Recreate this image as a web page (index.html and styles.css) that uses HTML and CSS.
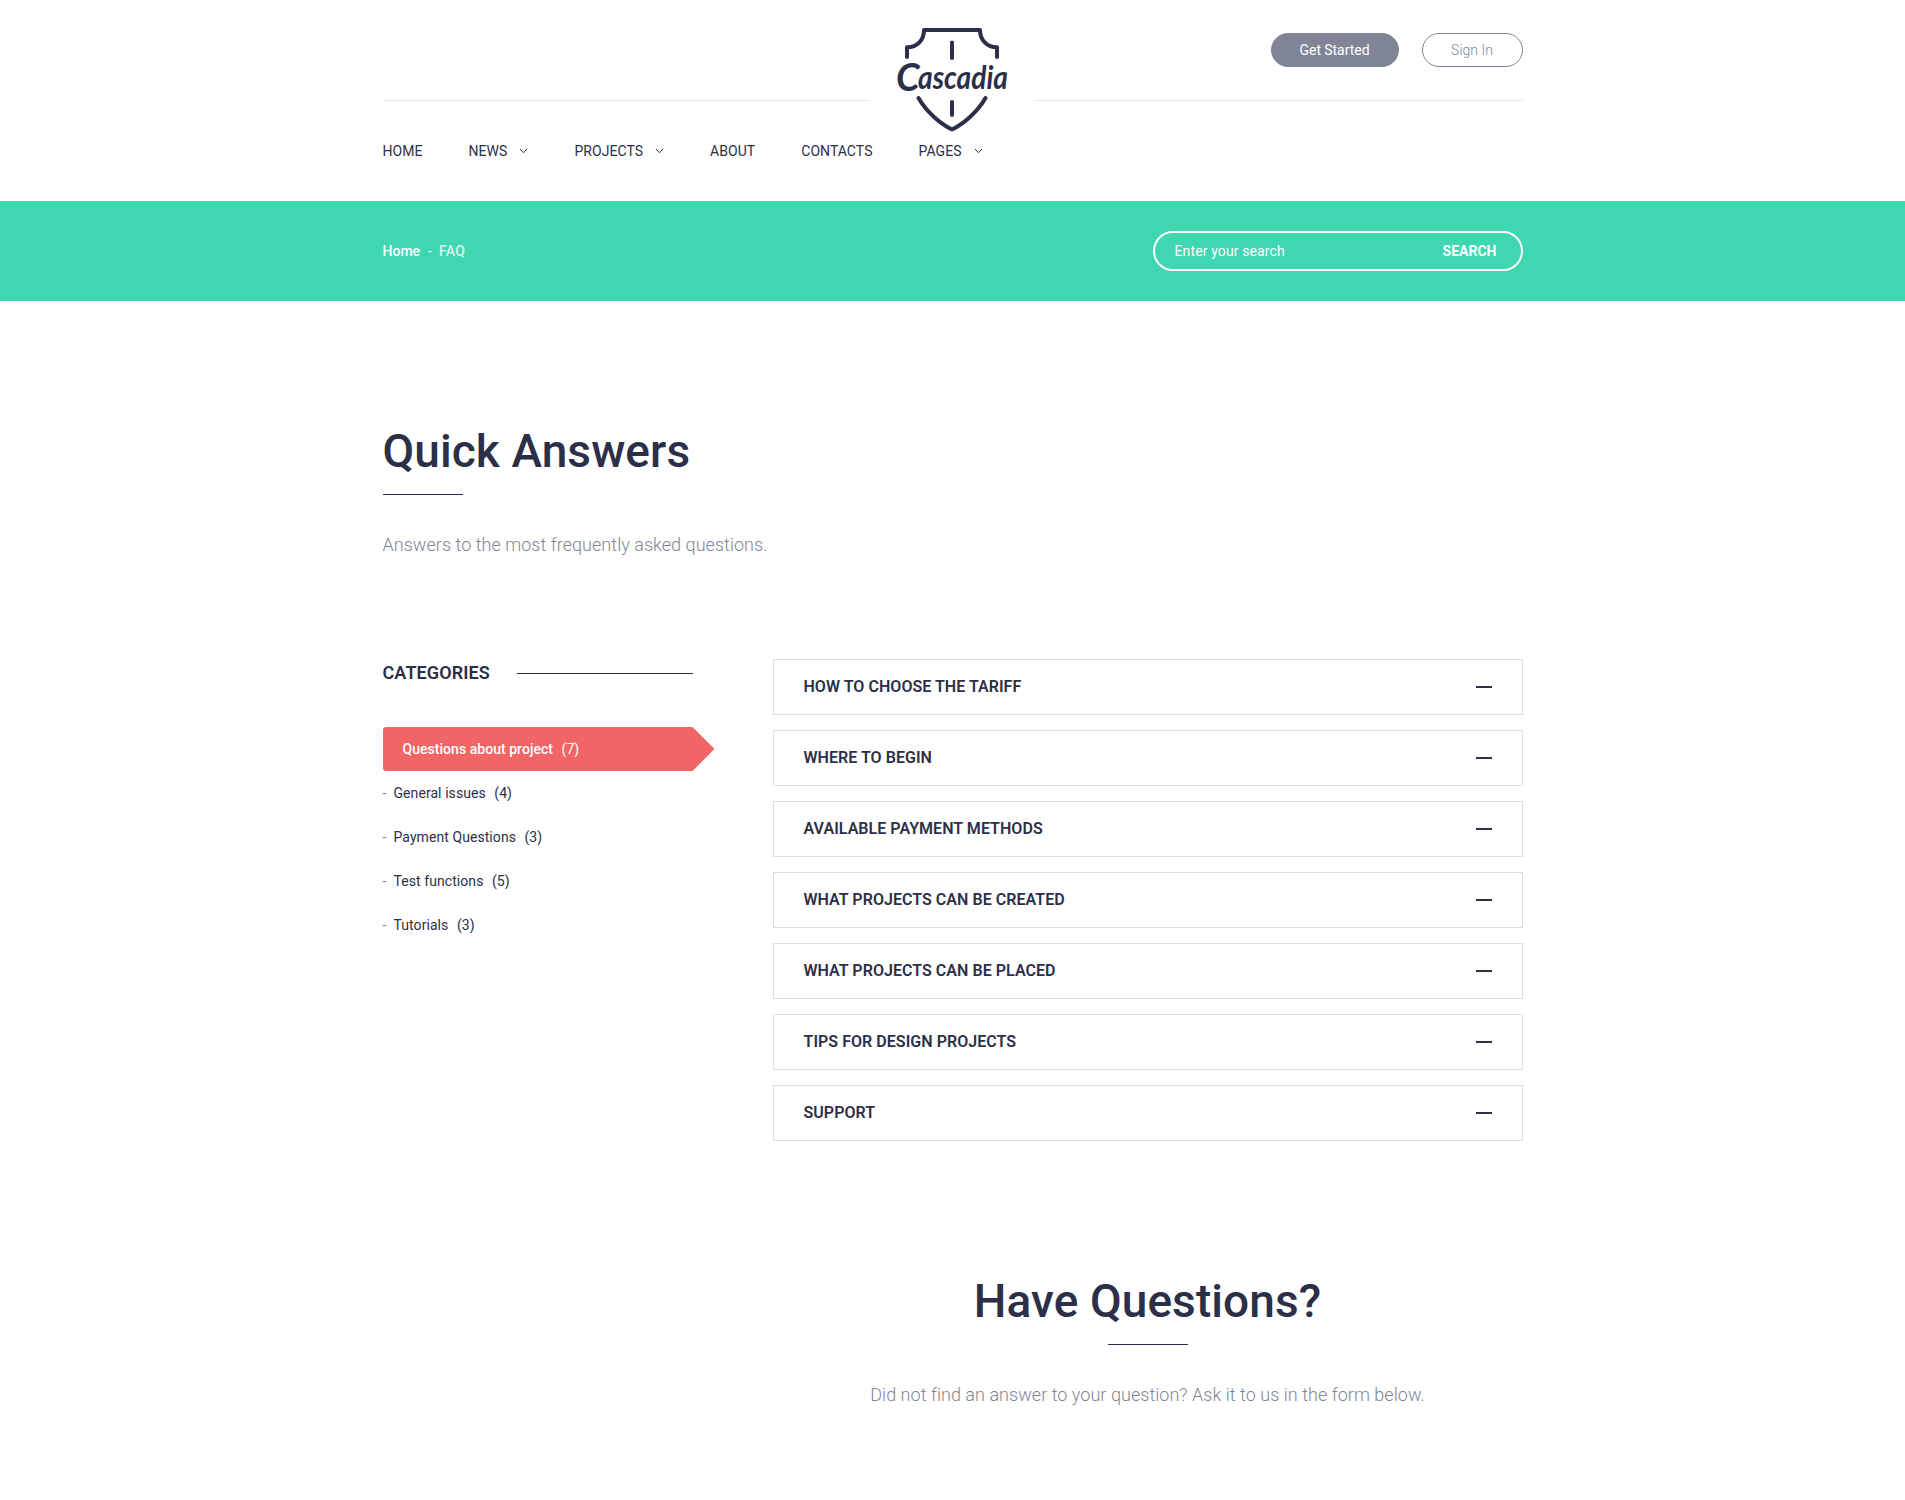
FILE: index.html
```
<!DOCTYPE html>
<html lang="en">
<head>
<meta charset="utf-8">
<title>FAQ - Cascadia</title>
<link rel="stylesheet" href="styles.css">
</head>
<body>
<header class="header container">
  <div class="header-top">
    <span class="rule"></span>
    <a class="logo" href="#" aria-label="Cascadia">
      <svg width="165" height="120" viewBox="870 20 165 120">
        <g fill="none" stroke="#2b2f48" stroke-width="4" stroke-linecap="round" stroke-linejoin="round">
          <path d="M907 57V47.300C917.500 47.300 924 40 924 30H980C980 40 987 47.300 997 47.300V57"/>
          <path d="M952 42.500V58M952 102V115"/>
          <path d="M918.500 98C926 111 939 123 952 129.500C965 123 978 111 985.500 98"/>
        </g>
        <text class="wordmark" y="89"><tspan class="initial" x="896" y="90.500">C</tspan><tspan x="918" y="88.500" textLength="90" lengthAdjust="spacingAndGlyphs">ascadia</tspan></text>
      </svg>
    </a>
    <div class="rule">
      <div class="actions"><a class="btn btn-fill" href="#">Get Started</a><a class="btn btn-line" href="#">Sign In</a></div>
    </div>
  </div>
  <nav class="nav">
    <a href="#">HOME</a>
    <a href="#">NEWS<svg class="chev" width="9" height="6" viewBox="0 0 9 6"><path d="M1 1l3.500 3.700L8 1"/></svg></a>
    <a href="#">PROJECTS<svg class="chev" width="9" height="6" viewBox="0 0 9 6"><path d="M1 1l3.500 3.700L8 1"/></svg></a>
    <a href="#">ABOUT</a>
    <a href="#">CONTACTS</a>
    <a href="#">PAGES<svg class="chev" width="9" height="6" viewBox="0 0 9 6"><path d="M1 1l3.500 3.700L8 1"/></svg></a>
  </nav>
</header>
<section class="band">
  <div class="container band-inner">
    <div class="crumbs"><a href="#">Home</a><span class="sep">-</span><span class="here">FAQ</span></div>
    <div class="search"><span>Enter your search</span><b>SEARCH</b></div>
  </div>
</section>
<main class="container">
  <div class="intro">
    <h1>Quick Answers</h1>
    <p>Answers to the most frequently asked questions.</p>
  </div>
  <div class="columns">
    <aside class="side">
      <h2>CATEGORIES</h2>
      <ul class="cats">
        <li class="active"><span>Questions about project</span><span class="n">(7)</span></li>
        <li><i>-</i><span>General issues</span><span class="n">(4)</span></li>
        <li><i>-</i><span>Payment Questions</span><span class="n">(3)</span></li>
        <li><i>-</i><span>Test functions</span><span class="n">(5)</span></li>
        <li><i>-</i><span>Tutorials</span><span class="n">(3)</span></li>
      </ul>
    </aside>
    <div class="content">
      <div class="faq">
        <div class="q">HOW TO CHOOSE THE TARIFF</div>
        <div class="q">WHERE TO BEGIN</div>
        <div class="q">AVAILABLE PAYMENT METHODS</div>
        <div class="q">WHAT PROJECTS CAN BE CREATED</div>
        <div class="q">WHAT PROJECTS CAN BE PLACED</div>
        <div class="q">TIPS FOR DESIGN PROJECTS</div>
        <div class="q">SUPPORT</div>
      </div>
      <div class="ask">
        <h1>Have Questions?</h1>
        <p>Did not find an answer to your question? Ask it to us in the form below.</p>
      </div>
    </div>
  </div>
</main>
</body>
</html>
```
FILE: styles.css
```
* { box-sizing: border-box; }
body {
  margin: 0;
  font-family: Roboto, "Liberation Sans", sans-serif;
  font-size: 14px;
  line-height: 24px;
  color: #2b2f48;
  background: #fff;
}
a { color: inherit; text-decoration: none; }
h1, h2, p, ul { margin: 0; padding: 0; }
.container { width: 1140px; margin: 0 auto; }

.header { height: 201px; }
.header-top { display: flex; justify-content: space-between; height: 101px; }
.rule { width: 488px; border-bottom: 1px solid #dfe8ee; }
.logo { height: 120px; margin: 20px 0 -39px; }
.logo svg { display: block; }
.wordmark {
  font: italic 700 32px Lato, "Liberation Sans", sans-serif;
  fill: #2b2f48;
}
.initial { font-size: 38px; }
.actions { display: flex; justify-content: flex-end; gap: 23px; padding-top: 33px; }
.btn {
  width: 101px;
  height: 34px;
  border: 1px solid #7f8597;
  border-radius: 17px;
  line-height: 32px;
  text-align: center;
  font-weight: 300;
  color: #7f8597;
}
.btn-fill { width: 128px; background: #7f8597; color: #fff; font-weight: 400; letter-spacing: -.05px; }
.nav { display: flex; gap: 46px; padding-top: 38px; letter-spacing: .05px; }
.nav a { display: flex; align-items: center; gap: 12px; }
.chev path { fill: none; stroke: #2b2f48; stroke-width: 1; }

.band { height: 100px; background: #3fd7b2; color: #fff; }
.band-inner { display: flex; align-items: center; justify-content: space-between; height: 100%; }
.crumbs { display: flex; font-weight: 500; }
.sep { margin: 0 7px 0 8px; font-weight: 400; opacity: .8; }
.here { opacity: .8; letter-spacing: .3px; }
.search {
  display: flex;
  align-items: center;
  justify-content: space-between;
  width: 370px;
  height: 40px;
  padding: 0 24px 0 20px;
  border: 2px solid #fff;
  border-radius: 20px;
}
.search span { letter-spacing: .12px; }
.search b { font-weight: 700; }

h1 { font-size: 46px; line-height: 60px; font-weight: 500; letter-spacing: .09px; }
h1::after { content: ""; display: block; width: 80px; height: 1px; margin-top: 13px; background: #2b2f48; }
.intro { padding-top: 120px; }
.intro p, .ask p { margin-top: 34px; font-size: 18px; line-height: 32px; font-weight: 300; color: #7f8597; letter-spacing: .035px; }
.columns { display: flex; justify-content: space-between; margin-top: 98px; }
.side { width: 310px; }
h2 { display: flex; align-items: center; gap: 27px; font-size: 18px; line-height: 28px; font-weight: 600; letter-spacing: .1px; }
h2::after { content: ""; flex: 1; height: 1px; background: #2b2f48; }
.cats { margin-top: 40px; list-style: none; letter-spacing: .07px; }
.cats li { display: flex; align-items: center; height: 44px; }
.cats i { width: 11px; font-style: normal; color: #7f8597; }
.n { margin-left: 8.5px; }
.cats .active {
  width: 332px;
  padding-left: 20px;
  border-radius: 3px 0 0 3px;
  background: #f26567;
  color: #fff;
  font-weight: 500;
  letter-spacing: .04px;
  clip-path: polygon(0 0, 310px 0, 100% 50%, 310px 100%, 0 100%);
}
.active .n { font-weight: 400; }
.content { width: 750px; }
.faq { display: flex; flex-direction: column; gap: 15px; }
.q {
  display: flex;
  align-items: center;
  justify-content: space-between;
  height: 56px;
  padding: 0 30px;
  border: 1px solid #dcdfe1;
  font-size: 16px;
  font-weight: 600;
  letter-spacing: .045px;
}
.q::after { content: ""; width: 16px; height: 2px; background: #2b2f48; }
.ask { padding-top: 130px; text-align: center; }
.ask h1::after { margin-left: auto; margin-right: auto; }
```
